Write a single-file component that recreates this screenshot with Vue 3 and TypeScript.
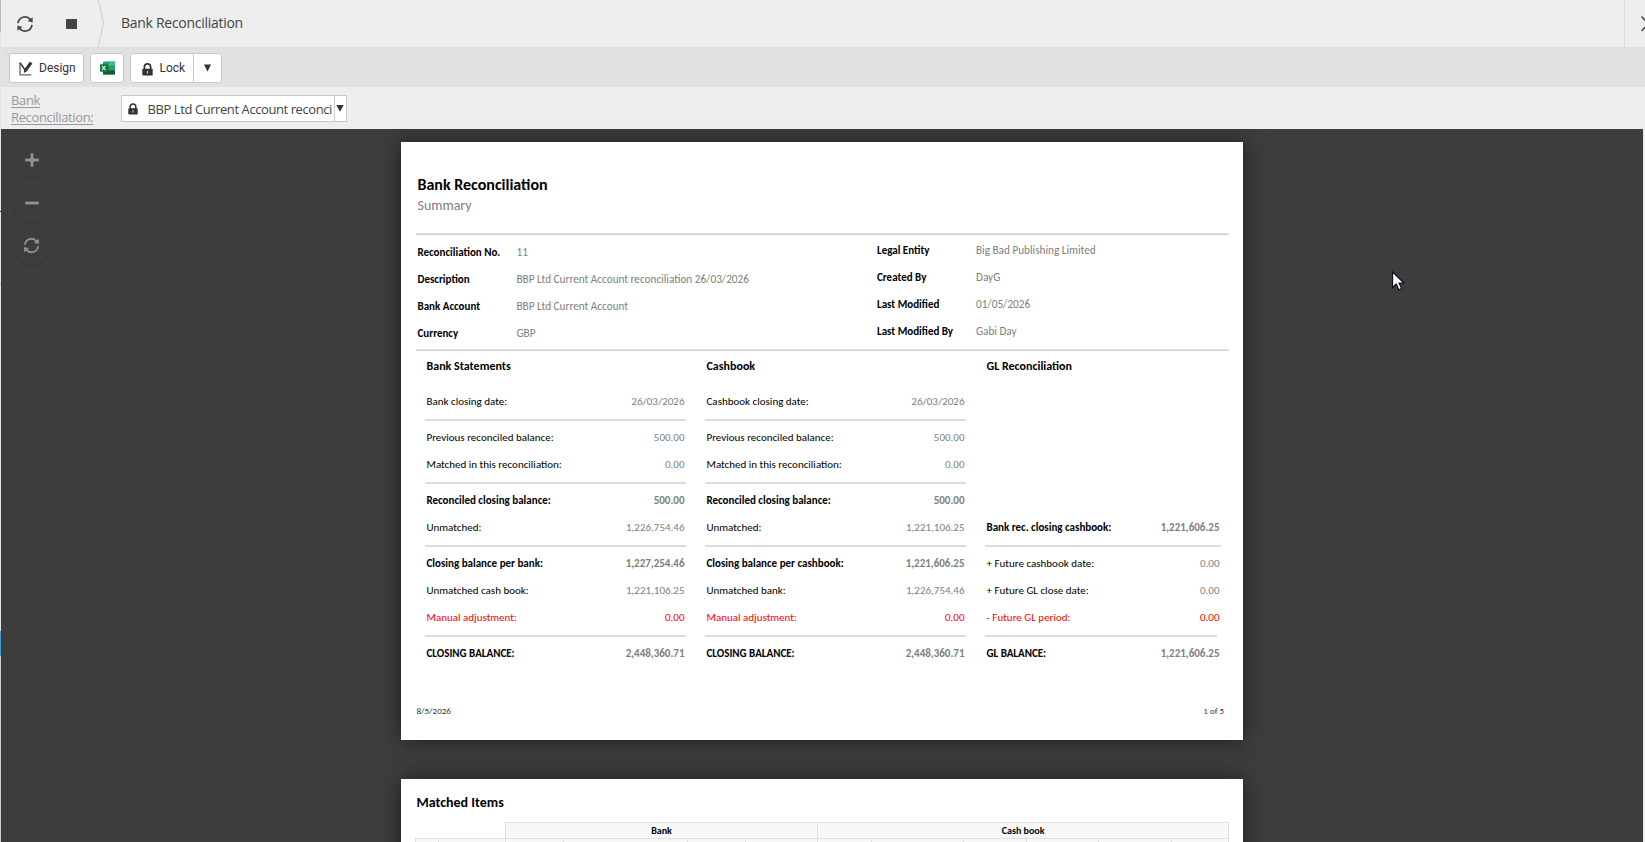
<script setup lang="ts">
interface Field {
  label: string
  value: string
}

interface Line {
  kind: 'row' | 'rule' | 'gap'
  label?: string
  value?: string
  tone?: 'strong' | 'alert'
  short?: boolean
}

interface Section {
  title: string
  lines: Line[]
}

const leftFields: Field[] = [
  { label: 'Reconciliation No.', value: '11' },
  { label: 'Description', value: 'BBP Ltd Current Account reconciliation 26/03/2026' },
  { label: 'Bank Account', value: 'BBP Ltd Current Account' },
  { label: 'Currency', value: 'GBP' },
]

const rightFields: Field[] = [
  { label: 'Legal Entity', value: 'Big Bad Publishing Limited' },
  { label: 'Created By', value: 'DayG' },
  { label: 'Last Modified', value: '01/05/2026' },
  { label: 'Last Modified By', value: 'Gabi Day' },
]

const row = (label: string, value: string, tone?: 'strong' | 'alert'): Line => ({ kind: 'row', label, value, tone })
const rule = (short = false): Line => ({ kind: 'rule', short })

const sections: Section[] = [
  {
    title: 'Bank Statements',
    lines: [
      row('Bank closing date:', '26/03/2026'),
      rule(),
      row('Previous reconciled balance:', '500.00'),
      row('Matched in this reconciliation:', '0.00'),
      rule(),
      row('Reconciled closing balance:', '500.00', 'strong'),
      row('Unmatched:', '1,226,754.46'),
      rule(),
      row('Closing balance per bank:', '1,227,254.46', 'strong'),
      row('Unmatched cash book:', '1,221,106.25'),
      row('Manual adjustment:', '0.00', 'alert'),
      rule(),
      row('CLOSING BALANCE:', '2,448,360.71', 'strong'),
    ],
  },
  {
    title: 'Cashbook',
    lines: [
      row('Cashbook closing date:', '26/03/2026'),
      rule(),
      row('Previous reconciled balance:', '500.00'),
      row('Matched in this reconciliation:', '0.00'),
      rule(),
      row('Reconciled closing balance:', '500.00', 'strong'),
      row('Unmatched:', '1,221,106.25'),
      rule(),
      row('Closing balance per cashbook:', '1,221,606.25', 'strong'),
      row('Unmatched bank:', '1,226,754.46'),
      row('Manual adjustment:', '0.00', 'alert'),
      rule(),
      row('CLOSING BALANCE:', '2,448,360.71', 'strong'),
    ],
  },
  {
    title: 'GL Reconciliation',
    lines: [
      { kind: 'gap' },
      row('Bank rec. closing cashbook:', '1,221,606.25', 'strong'),
      rule(),
      row('+ Future cashbook date:', '0.00'),
      row('+ Future GL close date:', '0.00'),
      row('- Future GL period:', '0.00', 'alert'),
      rule(true),
      row('GL BALANCE:', '1,221,606.25', 'strong'),
    ],
  },
]
</script>

<template>
  <div class="app">
    <div class="edge"></div>
    <div class="window">
      <header class="titlebar">
        <button class="tool refresh" aria-label="Refresh">
          <svg width="18" height="18" viewBox="0 0 18 18">
            <g fill="none" stroke="#444" stroke-width="1.7">
              <path d="M2 8.2A7 7 0 0 1 14.3 4.4" />
              <path d="M16 9.8A7 7 0 0 1 3.7 13.6" />
            </g>
            <path d="M16.6 2.2v5.2l-5-1.3z" fill="#444" />
            <path d="M1.4 15.8v-5.2l5 1.3z" fill="#444" />
          </svg>
        </button>
        <button class="tool stop" aria-label="Stop"><span></span></button>
        <svg class="chevron" width="8" height="47" viewBox="0 0 8 47">
          <path d="M1 -1L6.5 23L1 48" fill="none" stroke="#d6d6d6" stroke-width="1.4" />
        </svg>
        <h1>Bank Reconciliation</h1>
        <div class="close">
          <svg width="15" height="16" viewBox="0 0 15 16">
            <path d="M.5 .5L14.5 15M.5 15L14.5 .5" stroke="#444" stroke-width="1.5" />
          </svg>
        </div>
      </header>

      <div class="toolbar">
        <button class="btn design">
          <svg width="14" height="15" viewBox="0 0 14 15">
            <path d="M1 1.2V13.8H12.4" fill="none" stroke="#667" stroke-width="1.3" />
            <path d="M1.2 2L6.6 9.6" stroke="#333" stroke-width="1.5" />
            <path d="M10.9 .6L13.4 2.4L7.6 10.6L4.8 12L5.1 8.8Z" fill="#333" />
          </svg>
          <span>Design</span>
        </button>
        <button class="btn excel" aria-label="Export to Excel">
          <svg width="15" height="14" viewBox="0 0 15 14">
            <rect x="3" y=".5" width="12" height="13" rx="1" fill="#21a366" />
            <rect x="9" y=".5" width="6" height="4.3" fill="#33c481" />
            <rect x="3" y="4.8" width="6" height="4.4" fill="#107c41" />
            <rect x="3" y="9.2" width="12" height="4.3" fill="#185c37" />
            <rect x="9" y="4.8" width="6" height="4.4" fill="#21a366" />
            <rect x="0" y="3.2" width="7.6" height="7.6" rx=".6" fill="#107c41" />
            <path d="M2.2 5L5.4 9M5.4 5L2.2 9" stroke="#fff" stroke-width="1.1" />
          </svg>
        </button>
        <div class="split">
          <button class="lock">
            <svg width="11" height="13" viewBox="0 0 11 13">
              <path d="M2.4 6.5V4a3.1 3.1 0 0 1 6.2 0V6.5" fill="none" stroke="#333" stroke-width="1.7" />
              <rect x=".3" y="5.7" width="10.4" height="6.9" rx=".9" fill="#333" />
              <path d="M5.5 8v2.6" stroke="#ccc" stroke-width="1.2" />
            </svg>
            <span>Lock</span>
          </button>
          <button class="more" aria-label="More">
            <svg width="7" height="8" viewBox="0 0 7 8"><path d="M0 .5H7L3.5 7.5Z" fill="#333" /></svg>
          </button>
        </div>
      </div>

      <div class="filter">
        <a class="link">Bank Reconciliation:</a>
        <div class="select">
          <svg class="padlock" width="10" height="12" viewBox="0 0 11 13">
            <path d="M2.4 6.5V4a3.1 3.1 0 0 1 6.2 0V6.5" fill="none" stroke="#333" stroke-width="1.7" />
            <rect x=".3" y="5.7" width="10.4" height="6.9" rx=".9" fill="#333" />
            <path d="M5.5 8v2.6" stroke="#ccc" stroke-width="1.2" />
          </svg>
          <span class="value">BBP Ltd Current Account reconci</span>
          <span class="arrow">
            <svg width="8" height="7" viewBox="0 0 8 7"><path d="M.3 0H7.7L4 6.8Z" fill="#333" /></svg>
          </span>
        </div>
      </div>

      <main class="viewer">
        <div class="zoom">
          <button aria-label="Zoom in">
            <svg width="14" height="14" viewBox="0 0 14 14"><path d="M7 .3V13.7M.3 7H13.7" stroke="#929292" stroke-width="2.8" /></svg>
          </button>
          <button aria-label="Zoom out">
            <svg width="14" height="14" viewBox="0 0 14 14"><path d="M.3 7H13.7" stroke="#929292" stroke-width="2.8" /></svg>
          </button>
          <button aria-label="Reset zoom">
            <svg width="17" height="17" viewBox="0 0 18 18">
              <g fill="none" stroke="#929292" stroke-width="1.9">
                <path d="M2 8.2A7 7 0 0 1 14.3 4.4" />
                <path d="M16 9.8A7 7 0 0 1 3.7 13.6" />
              </g>
              <path d="M16.9 1.9v5.5l-5.3-1.3z" fill="#929292" />
              <path d="M1.1 16.1v-5.5l5.3 1.3z" fill="#929292" />
            </svg>
          </button>
        </div>

        <div class="pages">
          <article class="page summary">
            <h2>Bank Reconciliation</h2>
            <p class="subtitle">Summary</p>
            <hr />
            <div class="info">
              <dl>
                <div v-for="f in leftFields" :key="f.label">
                  <dt>{{ f.label }}</dt>
                  <dd>{{ f.value }}</dd>
                </div>
              </dl>
              <dl class="right">
                <div v-for="f in rightFields" :key="f.label">
                  <dt>{{ f.label }}</dt>
                  <dd>{{ f.value }}</dd>
                </div>
              </dl>
            </div>
            <hr />
            <div class="sections">
              <section v-for="s in sections" :key="s.title">
                <h3>{{ s.title }}</h3>
                <template v-for="(l, i) in s.lines" :key="i">
                  <div v-if="l.kind === 'row'" class="line" :class="l.tone">
                    <span>{{ l.label }}</span>
                    <span class="amount">{{ l.value }}</span>
                  </div>
                  <div v-else-if="l.kind === 'rule'" class="rule" :class="{ short: l.short }"></div>
                  <div v-else class="gap"></div>
                </template>
              </section>
            </div>
            <footer>
              <span>8/5/2026</span>
              <span>1 of 5</span>
            </footer>
          </article>

          <article class="page items">
            <h2>Matched Items</h2>
            <table>
              <colgroup>
                <col class="c1" /><col class="c2" /><col class="c3" /><col class="c4" /><col class="c5" /><col class="c6" />
                <col class="c7" /><col class="c8" /><col class="c9" /><col class="c10" /><col class="c11" /><col class="c12" />
              </colgroup>
              <tbody>
                <tr class="groups">
                  <td colspan="2" class="blank"></td>
                  <th colspan="4">Bank</th>
                  <th colspan="6">Cash book</th>
                </tr>
                <tr class="heads">
                  <td v-for="n in 12" :key="n"></td>
                </tr>
              </tbody>
            </table>
          </article>
        </div>

        <svg class="cursor" width="13" height="20" viewBox="0 0 13 20">
          <path
            d="M.6 1V16.4L4.2 13L6.9 18.8L9.6 17.6L7 12H11.9Z"
            fill="#fff"
            stroke="#0b0b18"
            stroke-width="1.1"
          />
        </svg>
      </main>
    </div>
  </div>
</template>

<style>
body {
  background: #eee;
  overflow: hidden;
}
</style>

<style scoped>
.app {
  display: flex;
  width: 1645px;
  height: 842px;
  overflow: hidden;
  background: #eee;
  font-family: "Open Sans", "Noto Sans", sans-serif;
  color: #444;
}
.edge {
  width: 1px;
  flex: none;
  background: linear-gradient(#b8b8b8 32px, #e4e4e4 32px 211px, #333 211px 212px, #e4e4e4 212px 283px, #c9c98a 283px 285px, #e4e4e4 285px 631px, #3d9bd0 631px 656px, #d0d0d0 656px);
}
.window {
  display: flex;
  flex-direction: column;
  flex: 1;
  min-width: 0;
}
button {
  margin: 0;
  padding: 0;
  border: 0;
  background: none;
  font: inherit;
  color: inherit;
}

.titlebar {
  display: flex;
  align-items: center;
  box-sizing: border-box;
  height: 49px;
  border-bottom: 2px solid #ddd;
  background: #eee;
}
.tool {
  display: flex;
  align-items: center;
  justify-content: center;
}
.refresh {
  width: 48px;
}
.stop {
  width: 45px;
}
.stop span {
  width: 11px;
  height: 10px;
  background: #444;
}
.chevron {
  margin-left: 3px;
}
h1 {
  margin: 0 0 2px 16px;
  flex: 1;
  font-size: 14px;
  font-weight: 400;
  line-height: 20px;
  letter-spacing: -0.28px;
}
.close {
  display: flex;
  align-items: center;
  flex: none;
  box-sizing: border-box;
  width: 21px;
  height: 47px;
  padding-left: 16px;
  border-left: 1px solid #dcdcdc;
  overflow: hidden;
}
.close svg {
  flex: none;
}

.toolbar {
  display: flex;
  align-items: flex-start;
  box-sizing: border-box;
  height: 38px;
  padding: 4px 0 0 8px;
  background: #e1e1e1;
  font-family: Roboto, "Liberation Sans", sans-serif;
  font-size: 12px;
  color: #333;
}
.btn,
.split {
  display: flex;
  align-items: center;
  box-sizing: border-box;
  height: 30px;
  border: 1px solid #c8c8c8;
  border-radius: 3px;
  background: #fff;
}
.design {
  width: 75px;
  padding-left: 9px;
  gap: 6px;
}
.excel {
  width: 34px;
  margin: 0 6px;
  padding-left: 8.5px;
}
.lock {
  display: flex;
  align-items: center;
  box-sizing: border-box;
  width: 63px;
  height: 28px;
  padding-left: 11px;
  gap: 6.5px;
  border-right: 1px solid #c8c8c8;
}
.lock svg {
  margin-top: 2px;
}
.more {
  display: flex;
  justify-content: center;
  width: 27px;
}

.filter {
  display: flex;
  box-sizing: border-box;
  height: 42px;
  background: #eee;
  font-size: 13px;
}
.link {
  width: 92px;
  margin: 5px 18px 0 10px;
  line-height: 17px;
  letter-spacing: -0.36px;
  color: #999;
  text-decoration: underline;
  text-underline-offset: 2px;
}
.select {
  display: flex;
  align-items: center;
  box-sizing: border-box;
  width: 226px;
  height: 27px;
  margin-top: 8px;
  border: 1px solid #c8c8c8;
  background: #fff;
}
.padlock {
  flex: none;
  margin-left: 6px;
}
.value {
  width: 186px;
  margin-left: 9.5px;
  white-space: nowrap;
  letter-spacing: -0.42px;
}
.arrow {
  display: flex;
  align-items: flex-start;
  justify-content: center;
  flex: 1;
  align-self: stretch;
  padding-top: 9px;
  border-left: 1px solid #ccc;
}

.viewer {
  position: relative;
  flex: none;
  width: 1642px;
  height: 713px;
  overflow: hidden;
  background: #3d3d3d;
}
.zoom {
  position: absolute;
  top: 12px;
  left: 12px;
  display: flex;
  flex-direction: column;
  gap: 6px;
}
.zoom button {
  display: flex;
  align-items: center;
  justify-content: center;
  width: 37px;
  height: 37px;
  border-radius: 50%;
  box-shadow: 0 2px 2px rgba(0, 0, 0, 0.08);
}
.pages {
  width: 842px;
  margin: 13px 0 0 400px;
}
.page {
  box-sizing: border-box;
  width: 842px;
  padding: 0 14px 0 15px;
  background: #fff;
  box-shadow: 0 0 20px rgba(0, 0, 0, 0.5);
  font-family: Carlito, Calibri, Lato, sans-serif;
  font-size: 11px;
  color: #000;
}
.summary {
  height: 598px;
  padding-top: 32px;
  margin-bottom: 39px;
}
.page h2 {
  margin: 0 0 0 1.5px;
  font-size: 16px;
  line-height: 22px;
}
.subtitle {
  margin: 0 0 17px 1.5px;
  font-size: 14px;
  line-height: 20px;
  color: #808080;
}
hr {
  height: 2px;
  margin: 0;
  border: 0;
  background: linear-gradient(#e4e4e4 1px, #d0d0d0 1px);
}
.info {
  display: grid;
  grid-template-columns: 459.5px 1fr;
  box-sizing: border-box;
  height: 114px;
  padding: 4px 0 0 1.5px;
}
.info dl {
  margin: 0;
}
.info dl.right {
  margin-top: -2px;
}
.info dl div {
  display: grid;
  grid-template-columns: 99px 1fr;
  line-height: 27px;
}
.info dt {
  font-weight: 700;
}
.info dd {
  margin: 0;
  font-size: 11.22px;
  color: #808080;
}
.sections {
  display: grid;
  grid-template-columns: 261px 261px 236px;
  gap: 19px;
  padding-left: 9px;
}
h3 {
  margin: 5px 0 12px 1.5px;
  font-size: 12px;
  line-height: 20px;
}
.line {
  display: flex;
  justify-content: space-between;
  padding: 0 1.5px;
  line-height: 27px;
}
.amount {
  color: #808080;
}
.strong {
  font-weight: 700;
}
.alert,
.alert .amount {
  color: #f00;
}
.rule {
  height: 2px;
  margin: 4px 0 3px;
  background: #dcdcdc;
}
.rule.short {
  width: 232px;
}
.gap {
  height: 126px;
}
footer {
  display: flex;
  justify-content: space-between;
  margin-top: 38px;
  padding: 0 5px 0 0.5px;
  font-size: 9px;
  line-height: 12px;
  color: #333;
}

.items {
  height: 300px;
  padding-top: 14px;
}
.items h2 {
  margin: 0 0 9px 0.5px;
  font-size: 14px;
  line-height: 20px;
}
table {
  width: 814px;
  margin-left: -1px;
  border-collapse: collapse;
  table-layout: fixed;
}
th,
td {
  padding: 0;
  border: 1px solid #e0e0e0;
  background: #f8f8f8;
}
th {
  font-size: 10px;
  line-height: 15px;
}
.blank {
  border-top: 0;
  border-left: 0;
  background: #fff;
}
.groups {
  height: 16px;
}
.heads td {
  height: 40px;
}
.c1 { width: 23px; }
.c2 { width: 67px; }
.c3 { width: 58px; }
.c4 { width: 124px; }
.c5 { width: 58px; }
.c6 { width: 72px; }
.c7 { width: 54px; }
.c8 { width: 92px; }
.c9 { width: 63px; }
.c10 { width: 72px; }
.c11 { width: 73px; }
.c12 { width: 57px; }

.cursor {
  position: absolute;
  top: 142px;
  left: 1391px;
}
</style>
